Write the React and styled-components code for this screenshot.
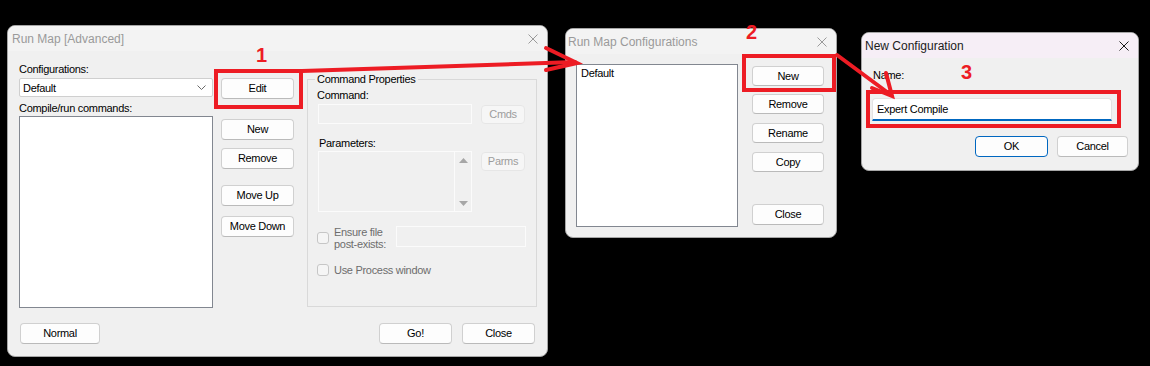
import React from "react";
import styled, { createGlobalStyle } from "styled-components";

const RED = "#ed1c24";

const GlobalStyle = createGlobalStyle`
  html, body { margin: 0; padding: 0; background: #000; }
  body { font-family: "Liberation Sans", Arial, sans-serif; overflow: hidden; }
`;

const Desktop = styled.div`
  position: relative;
  width: 1150px;
  height: 366px;
  background: #000;
  overflow: hidden;
`;

const Window = styled.section`
  position: absolute;
  left: ${(p) => p.$x}px;
  top: ${(p) => p.$y}px;
  width: ${(p) => p.$w}px;
  height: ${(p) => p.$h}px;
  box-sizing: border-box;
  display: flex;
  flex-direction: column;
  border: 1px solid #a6a6a6;
  border-radius: 8px;
  overflow: hidden;
  background: #f0f0f0;
  font-family: "Liberation Sans", Arial, sans-serif;
  font-size: 11px;
  letter-spacing: -0.3px;
  color: #000;
`;

const TitleBar = styled.header`
  flex: none;
  height: 25px;
  display: flex;
  align-items: center;
  justify-content: space-between;
  padding-left: ${(p) => p.$pad}px;
  background: ${(p) => (p.$active ? "#f6eef6" : "#f3f3f3")};
`;

const Title = styled.span`
  font-size: 12px;
  letter-spacing: 0;
  line-height: 14px;
  white-space: nowrap;
  color: ${(p) => (p.$active ? "#1b1b1b" : "#9a9a9a")};
`;

const CloseBox = styled.span`
  width: 28px;
  height: 100%;
  display: flex;
  align-items: center;
  justify-content: center;
  color: ${(p) => (p.$active ? "#1b1b1b" : "#9a9a9a")};
`;

function CloseIcon() {
  return (
    <svg width="10" height="10" viewBox="0 0 10 10">
      <path d="M0.5 0.5 L9.5 9.5 M9.5 0.5 L0.5 9.5" stroke="currentColor" strokeWidth="1" fill="none" />
    </svg>
  );
}

function WindowTitle({ text, active, pad }) {
  return (
    <TitleBar $active={active} $pad={pad}>
      <Title $active={active}>{text}</Title>
      <CloseBox $active={active}>
        <CloseIcon />
      </CloseBox>
    </TitleBar>
  );
}

const Btn = styled.button`
  box-sizing: border-box;
  flex: none;
  width: ${(p) => p.$w ?? 73}px;
  height: ${(p) => p.$h ?? 21}px;
  margin: ${(p) => p.$mt ?? 0}px 0 0 ${(p) => p.$ml ?? 0}px;
  padding: 0;
  display: flex;
  align-items: center;
  justify-content: center;
  font: inherit;
  letter-spacing: inherit;
  line-height: 13px;
  color: ${(p) => (p.disabled ? "#9d9d9d" : "#000")};
  background: ${(p) => (p.disabled ? "#f6f6f6" : "#fdfdfd")};
  border: 1px solid ${(p) => (p.$default ? "#0067c0" : p.disabled ? "#e6e6e6" : "#d0d0d0")};
  border-bottom-color: ${(p) => (p.$default ? "#0067c0" : p.disabled ? "#e6e6e6" : "#bababa")};
  border-radius: 4px;
`;

/* ---------- Run Map [Advanced] ---------- */

const AdvBody = styled.div`
  flex: 1;
  display: flex;
  flex-direction: column;
  padding: 11px 10px 0 11px;
`;

const MainRow = styled.div`
  display: flex;
  align-items: flex-start;
  height: 246px;
`;

const Column = styled.div`
  display: flex;
  flex-direction: column;
  flex: none;
  width: ${(p) => p.$w}px;
  margin-left: ${(p) => p.$ml ?? 0}px;
`;

const Label = styled.div`
  height: 14px;
  line-height: 14px;
  margin-top: ${(p) => p.$mt ?? 0}px;
  margin-left: ${(p) => p.$ml ?? 0}px;
  white-space: nowrap;
  color: ${(p) => (p.$muted ? "#6d6d6d" : "#000")};
`;

const Combo = styled.div`
  box-sizing: border-box;
  height: 19px;
  margin-top: 2px;
  display: flex;
  align-items: center;
  justify-content: space-between;
  padding: 0 6px 0 3px;
  background: #fff;
  border: 1px solid #cfcfcf;
  border-radius: 2px;
`;

const ListBox = styled.div`
  box-sizing: border-box;
  flex: none;
  width: ${(p) => p.$w}px;
  height: ${(p) => p.$h}px;
  margin-top: ${(p) => p.$mt ?? 0}px;
  padding: 1px 4px;
  background: #fff;
  border: 1px solid #828790;
  line-height: 14px;
`;

const GroupBox = styled.fieldset`
  box-sizing: border-box;
  flex: none;
  width: 230px;
  height: 235px;
  margin: 10px 0 0 13px;
  padding: 0 10px;
  min-width: 0;
  border: 1px solid #d9d9d9;
`;

const Legend = styled.legend`
  padding: 0 2px;
  margin-left: -3px;
  line-height: 14px;
  white-space: nowrap;
`;

const FieldRow = styled.div`
  display: flex;
  align-items: ${(p) => p.$align ?? "center"};
  margin-top: ${(p) => p.$mt ?? 0}px;
`;

const DisabledBox = styled.div`
  box-sizing: border-box;
  flex: none;
  display: flex;
  justify-content: flex-end;
  width: ${(p) => p.$w}px;
  height: ${(p) => p.$h}px;
  margin-left: ${(p) => p.$ml ?? 0}px;
  background: #f0f0f0;
  border: 1px solid #fbfbfb;
`;

const ScrollTrack = styled.div`
  box-sizing: border-box;
  width: 17px;
  display: flex;
  flex-direction: column;
  align-items: center;
  justify-content: space-between;
  padding: 6px 0 5px;
  border-left: 1px solid #fbfbfb;
`;

const CheckBox = styled.span`
  box-sizing: border-box;
  flex: none;
  width: 12px;
  height: 12px;
  margin-top: ${(p) => p.$mt ?? 0}px;
  margin-left: -1px;
  background: #f5f5f5;
  border: 1px solid #c6c6c6;
  border-radius: 3px;
`;

const CheckText = styled.span`
  margin-left: 5px;
  line-height: 12px;
  white-space: nowrap;
  color: #6d6d6d;
`;

const Footer = styled.div`
  display: flex;
  align-items: center;
  gap: 10px;
  margin-top: 15px;
  padding: 0 2px 0 1px;
`;

const Spacer = styled.div`
  flex: 1;
`;

function Chevron() {
  return (
    <svg width="9" height="5" viewBox="0 0 9 5">
      <polyline points="0.5,0.5 4.5,4.5 8.5,0.5" fill="none" stroke="#6a6a6a" strokeWidth="1" />
    </svg>
  );
}

function Tri({ down }) {
  return (
    <svg width="9" height="5" viewBox="0 0 9 5">
      <polygon points={down ? "0,0 9,0 4.5,5" : "0,5 9,5 4.5,0"} fill="#a6a6a6" />
    </svg>
  );
}

function AdvancedDialog() {
  return (
    <Window $x={7} $y={25} $w={541} $h={332}>
      <WindowTitle text="Run Map [Advanced]" pad={4} />
      <AdvBody>
        <MainRow>
          <Column $w={194}>
            <Label>Configurations:</Label>
            <Combo>
              <span>Default</span>
              <Chevron />
            </Combo>
            <Label $mt={4}>Compile/run commands:</Label>
            <ListBox $w={194} $h={192} $mt={1} />
          </Column>
          <Column $w={73} $ml={8}>
            <Btn $mt={16}>Edit</Btn>
            <Btn $mt={20}>New</Btn>
            <Btn $mt={8}>Remove</Btn>
            <Btn $mt={16}>Move Up</Btn>
            <Btn $mt={10}>Move Down</Btn>
          </Column>
          <GroupBox>
            <Legend>Command Properties</Legend>
            <Label $mt={2} $ml={-1}>Command:</Label>
            <FieldRow $mt={2}>
              <DisabledBox $w={154} $h={20} />
              <Btn disabled $w={44} $h={19} $ml={9}>Cmds</Btn>
            </FieldRow>
            <Label $mt={12} $ml={1}>Parameters:</Label>
            <FieldRow $mt={1} $align="flex-start">
              <DisabledBox $w={154} $h={61}>
                <ScrollTrack>
                  <Tri />
                  <Tri down />
                </ScrollTrack>
              </DisabledBox>
              <Btn disabled $w={44} $h={19} $ml={9} $mt={1}>Parms</Btn>
            </FieldRow>
            <FieldRow $mt={14} $align="flex-start">
              <CheckBox $mt={6} />
              <CheckText>
                Ensure file
                <br />
                post-exists:
              </CheckText>
              <Spacer />
              <DisabledBox $w={130} $h={21} />
            </FieldRow>
            <FieldRow $mt={14} $align="flex-start">
              <CheckBox />
              <CheckText>Use Process window</CheckText>
            </FieldRow>
          </GroupBox>
        </MainRow>
        <Footer>
          <Btn $w={80}>Normal</Btn>
          <Spacer />
          <Btn $w={73}>Go!</Btn>
          <Btn $w={73}>Close</Btn>
        </Footer>
      </AdvBody>
    </Window>
  );
}

/* ---------- Run Map Configurations ---------- */

const ConfigBody = styled.div`
  display: flex;
  align-items: flex-start;
  padding: 10px 0 0 10px;
`;

function ConfigurationsDialog() {
  return (
    <Window $x={565} $y={28} $w={272} $h={210}>
      <WindowTitle text="Run Map Configurations" pad={2} />
      <ConfigBody>
        <ListBox $w={162} $h={163}>Default</ListBox>
        <Column $w={72} $ml={14}>
          <Btn $w={72} $h={20} $mt={2}>New</Btn>
          <Btn $w={72} $h={20} $mt={8}>Remove</Btn>
          <Btn $w={72} $h={20} $mt={9}>Rename</Btn>
          <Btn $w={72} $h={20} $mt={9}>Copy</Btn>
          <Btn $w={72} $h={21} $mt={32}>Close</Btn>
        </Column>
      </ConfigBody>
    </Window>
  );
}

/* ---------- New Configuration ---------- */

const NewBody = styled.div`
  display: flex;
  flex-direction: column;
  padding: 10px 10px 0 11px;
`;

const NameInput = styled.input`
  box-sizing: border-box;
  width: 240px;
  height: 23px;
  margin: 16px 0 0 -1px;
  padding: 0 4px 1px;
  font: inherit;
  letter-spacing: inherit;
  color: #000;
  background: #fff;
  border: 1px solid #e3e3e3;
  border-bottom: 2px solid #0067c0;
  border-radius: 4px 4px 0 0;
  outline: none;
`;

const DialogButtons = styled.div`
  display: flex;
  justify-content: flex-end;
  gap: 9px;
  margin-top: 15px;
`;

function NewConfigDialog() {
  return (
    <Window $x={861} $y={32} $w={278} $h={139}>
      <WindowTitle text="New Configuration" active pad={3} />
      <NewBody>
        <Label>Name:</Label>
        <NameInput readOnly defaultValue="Expert Compile" />
        <DialogButtons>
          <Btn $default $w={73}>OK</Btn>
          <Btn $w={71}>Cancel</Btn>
        </DialogButtons>
      </NewBody>
    </Window>
  );
}

/* ---------- annotation overlay ---------- */

const Overlay = styled.svg`
  position: absolute;
  left: 0;
  top: 0;
  pointer-events: none;
`;

const StepNumber = styled.span`
  position: absolute;
  left: ${(p) => p.$x}px;
  top: ${(p) => p.$y}px;
  font: bold 20px/20px "Liberation Sans", Arial, sans-serif;
  color: ${RED};
`;

function Annotations() {
  return (
    <>
      <Overlay width="1150" height="366" viewBox="0 0 1150 366">
        <g fill="none" stroke={RED} strokeWidth="4">
          <rect x="216" y="71" width="85" height="36" />
          <rect x="744" y="56" width="90" height="34" />
          <rect x="868" y="92" width="251" height="34" />
        </g>
        <g fill="none" stroke={RED} strokeWidth="4" strokeLinecap="round">
          <path d="M302 71 L575 62" />
          <path d="M546 48 L577 63 L546 70" />
          <path d="M837 55 L891 95" />
          <path d="M886 73 L892 96 L872 88" />
        </g>
      </Overlay>
      <StepNumber $x={256} $y={45}>1</StepNumber>
      <StepNumber $x={746} $y={22}>2</StepNumber>
      <StepNumber $x={961} $y={62}>3</StepNumber>
    </>
  );
}

export default function App() {
  return (
    <>
      <GlobalStyle />
      <Desktop>
        <AdvancedDialog />
        <ConfigurationsDialog />
        <NewConfigDialog />
        <Annotations />
      </Desktop>
    </>
  );
}
